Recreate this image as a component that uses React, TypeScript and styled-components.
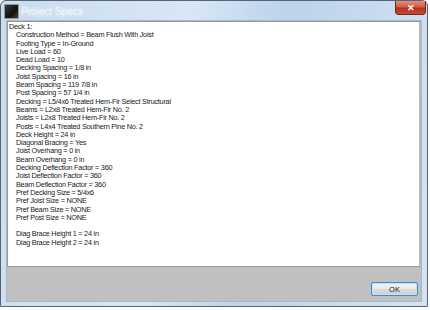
import styled, { createGlobalStyle } from "styled-components";

const GlobalStyle = createGlobalStyle`
  html, body {
    margin: 0;
    padding: 0;
    background: #ffffff;
  }
`;

const Window = styled.div`
  width: 428px;
  height: 307px;
  box-sizing: border-box;
  border: 1px solid #5a6470;
  border-radius: 6px 6px 0 0;
  background: linear-gradient(100deg, #c9dcf0 0%, #d8e7f6 40%, #bcd3ec 60%, #d3e3f4 100%);
  display: flex;
  flex-direction: column;
  padding: 0 5px 4px 5px;
  font-family: "Liberation Sans", Arial, sans-serif;
`;

const TitleBar = styled.div`
  height: 19px;
  display: flex;
  align-items: flex-start;
  justify-content: space-between;
`;

const TitleLeft = styled.div`
  display: flex;
  align-items: center;
  gap: 2px;
  padding-top: 3px;
  margin-left: -2px;
`;

const AppIcon = styled.div`
  width: 13px;
  height: 13px;
  background: linear-gradient(135deg, #3a3a3a 0%, #111 60%, #6a3a10 100%);
  border: 1px solid #8899aa;
`;

const Title = styled.span`
  font-size: 10px;
  color: #ffffff;
  opacity: 0.75;
  text-shadow: 0 0 4px rgba(255, 255, 255, 0.9);
`;

const CloseButton = styled.div`
  width: 31px;
  height: 14px;
  margin-right: -4px;
  border: 1px solid #6a2a22;
  border-top: none;
  border-radius: 0 0 4px 4px;
  background: linear-gradient(#e4917f 0%, #d25b45 45%, #b6301c 55%, #c74a33 100%);
  box-sizing: border-box;
  display: flex;
  align-items: center;
  justify-content: center;
  color: #ffffff;
  font-size: 9px;
  font-weight: bold;
`;

const Client = styled.div`
  flex: 1;
  display: flex;
  flex-direction: column;
  background: #c0c0c0;
  border: 1px solid #a9b8c8;
`;

const TextPanel = styled.div`
  height: 246px;
  box-sizing: border-box;
  background: #ffffff;
  border: 1px solid #9a9a9a;
  border-right: 2px solid #b8b8b8;
  padding: 1px 1px;
  font-size: 7.3px;
  letter-spacing: -0.25px;
  line-height: 8.3px;
  color: #1a1a1a;
`;

const Line = styled.div<{ $indent?: boolean }>`
  padding-left: ${(p) => (p.$indent ? "7px" : "0")};
  height: 8.3px;
  white-space: pre;
`;

const Footer = styled.div`
  flex: 1;
  display: flex;
  align-items: flex-end;
  justify-content: flex-end;
  padding: 0 3px 5px 0;
`;

const OkButton = styled.button`
  width: 47px;
  height: 14px;
  padding: 0;
  border: 1px solid #3f8fca;
  border-radius: 2px;
  background: linear-gradient(#f2f2f2 0%, #ebebeb 50%, #dcdcdc 50%, #cfcfcf 100%);
  box-shadow: inset 0 0 0 1px #bfe3f6;
  font-family: "Liberation Sans", Arial, sans-serif;
  font-size: 7.5px;
  color: #222;
`;

const lines: [string, boolean][] = [
  ["Deck 1:", false],
  ["Construction Method = Beam Flush With Joist", true],
  ["Footing Type = In-Ground", true],
  ["Live Load = 60", true],
  ["Dead Load = 10", true],
  ["Decking Spacing = 1/8 in", true],
  ["Joist Spacing = 16 in", true],
  ["Beam Spacing = 119 7/8 in", true],
  ["Post Spacing = 57 1/4 in", true],
  ["Decking = L5/4x6 Treated Hem-Fir Select Structural", true],
  ["Beams = L2x8 Treated Hem-Fir No. 2", true],
  ["Joists = L2x8 Treated Hem-Fir No. 2", true],
  ["Posts = L4x4 Treated Southern Pine No. 2", true],
  ["Deck Height = 24 in", true],
  ["Diagonal Bracing = Yes", true],
  ["Joist Overhang = 0 in", true],
  ["Beam Overhang = 0 in", true],
  ["Decking Deflection Factor = 360", true],
  ["Joist Deflection Factor = 360", true],
  ["Beam Deflection Factor = 360", true],
  ["Pref Decking Size = 5/4x6", true],
  ["Pref Joist Size = NONE", true],
  ["Pref Beam Size = NONE", true],
  ["Pref Post Size = NONE", true],
  ["", true],
  ["Diag Brace Height 1 = 24 in", true],
  ["Diag Brace Height 2 = 24 in", true],
];

function App() {
  return (
    <>
      <GlobalStyle />
      <Window>
        <TitleBar>
          <TitleLeft>
            <AppIcon />
            <Title>Project Specs</Title>
          </TitleLeft>
          <CloseButton>✕</CloseButton>
        </TitleBar>
        <Client>
          <TextPanel>
            {lines.map(([text, indent], i) => (
              <Line key={i} $indent={indent}>
                {text}
              </Line>
            ))}
          </TextPanel>
          <Footer>
            <OkButton>OK</OkButton>
          </Footer>
        </Client>
      </Window>
    </>
  );
}

export default App;
